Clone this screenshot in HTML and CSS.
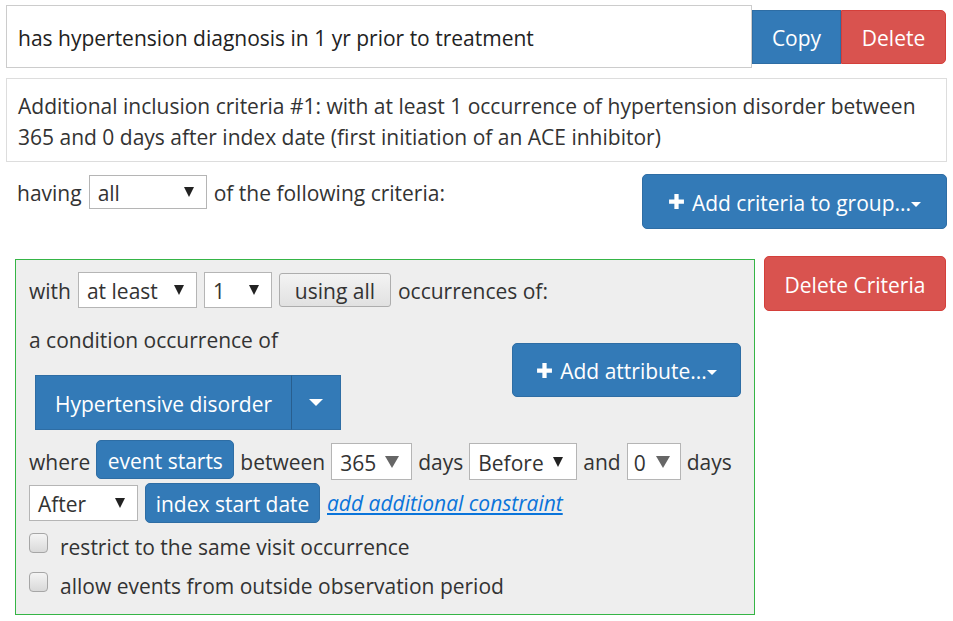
FILE: index.html
```html
<!DOCTYPE html>
<html>
<head>
<meta charset="utf-8">
<link rel="stylesheet" href="styles.css">
</head>
<body>
<div class="page">
  <div class="title-row">
    <div class="name-input">has hypertension diagnosis in 1 yr prior to treatment</div>
    <button class="btn primary copy">Copy</button>
    <button class="btn danger del">Delete</button>
  </div>
  <div class="desc">Additional inclusion criteria #1: with at least 1 occurrence of hypertension disorder between 365 and 0 days after index date (first initiation of an ACE inhibitor)</div>
  <div class="having-row">
    <div class="having">
      <span class="lbl">having</span>
      <span class="sel sel-all"><span>all</span><span class="tri"></span></span>
      <span class="lbl">of the following criteria:</span>
    </div>
    <button class="btn primary add-group">
      <svg class="plus" viewBox="0 0 16 16"><path d="M6 1h4v5h5v4h-5v5H6v-5H1V6h5z" fill="#fff"/></svg>
      <span>Add criteria to group...</span><span class="caret"></span>
    </button>
  </div>
  <div class="criteria-row">
    <div class="criteria-box">
      <div class="row-a">
        <span class="lbl">with</span>
        <span class="sel sel-atleast"><span>at least</span><span class="tri"></span></span>
        <span class="sel sel-one"><span>1</span><span class="tri"></span></span>
        <button class="btn btn-default using">using all</button>
        <span class="lbl">occurrences of:</span>
      </div>
      <div class="row-b">
        <div class="cond-col">
          <div class="cond-text">a condition occurrence of</div>
          <div class="concept">
            <button class="btn primary concept-main">Hypertensive disorder</button>
            <button class="btn primary concept-caret"><span class="caret big"></span></button>
          </div>
        </div>
        <button class="btn primary add-attr">
          <svg class="plus" viewBox="0 0 16 16"><path d="M6 1h4v5h5v4h-5v5H6v-5H1V6h5z" fill="#fff"/></svg>
          <span>Add attribute...</span><span class="caret"></span>
        </button>
      </div>
      <div class="row-c">
        <span class="txt">where</span>
        <button class="btn primary event">event starts</button>
        <span class="txt">between</span>
        <span class="sel sel-365"><span>365</span><span class="tri gray"></span></span>
        <span class="txt">days</span>
        <span class="sel sel-before"><span>Before</span><span class="tri"></span></span>
        <span class="txt">and</span>
        <span class="sel sel-zero"><span>0</span><span class="tri gray"></span></span>
        <span class="txt">days</span>
      </div>
      <div class="row-d">
        <span class="sel sel-after"><span>After</span><span class="tri"></span></span>
        <button class="btn primary index">index start date</button>
        <a class="link" href="#">add additional constraint</a>
      </div>
      <div class="check-row first">
        <span class="checkbox"></span>
        <span>restrict to the same visit occurrence</span>
      </div>
      <div class="check-row second">
        <span class="checkbox"></span>
        <span>allow events from outside observation period</span>
      </div>
    </div>
    <button class="btn danger del-crit">Delete Criteria</button>
  </div>
</div>
</body>
</html>
```
FILE: styles.css
```css
body {
  margin: 0;
  font-family: "Open Sans", "Segoe UI", sans-serif;
  font-size: 21px;
  line-height: 31px;
  color: #333;
  background: #fff;
}

.page {
  padding: 5px 0 0 6px;
  width: 941px;
}

.btn {
  font: inherit;
  line-height: 31px;
  border: 1px solid;
  display: inline-flex;
  align-items: center;
  justify-content: center;
  color: #fff;
  box-sizing: border-box;
  padding: 3px 0 0;
  margin: 0;
  border-radius: 5px;
  white-space: nowrap;
}

.primary {
  background: #337ab7;
  border-color: #2e6da4;
}

.danger {
  background: #d9534f;
  border-color: #d43f3a;
}

.btn-default {
  background: linear-gradient(#f3f3f3, #e1e1e1);
  border-color: #adadad;
  color: #333;
  border-radius: 3px;
}

.lbl {
  margin-top: 3px;
}

.title-row {
  display: flex;
  align-items: center;
  width: 940px;
}

.name-input {
  box-sizing: border-box;
  width: 746px;
  height: 63px;
  border: 1px solid #ccc;
  padding: 4px 11px 0;
  display: flex;
  align-items: center;
  color: #222;
}

.copy {
  width: 89px;
  height: 54px;
  border-radius: 0;
}

.del {
  width: 105px;
  height: 54px;
  border-radius: 0 5px 5px 0;
}

.desc {
  margin-top: 10px;
  box-sizing: border-box;
  height: 84px;
  border: 1px solid #ddd;
  padding: 12px 11px 8px;
}

.having-row {
  margin-top: 12px;
  display: flex;
  justify-content: space-between;
  align-items: flex-start;
}

.having {
  display: flex;
  align-items: center;
  gap: 7px;
  padding: 1px 0 0 11px;
}

.sel {
  box-sizing: border-box;
  background: #fff;
  border: 1px solid #b5b5b5;
  display: flex;
  align-items: center;
  justify-content: space-between;
  padding: 3px 12px 0 8px;
  color: #333;
}

.tri {
  width: 0;
  height: 0;
  border-left: 5px solid transparent;
  border-right: 5px solid transparent;
  border-top: 10px solid #222;
  margin-bottom: 3px;
}

.tri.gray {
  border-left-width: 7px;
  border-right-width: 7px;
  border-top: 12px solid #666;
}

.sel-all {
  width: 118px;
  height: 34px;
}

.plus {
  width: 17px;
  height: 17px;
  margin: 0 7px 3px 0;
}

.caret {
  display: inline-block;
  width: 0;
  height: 0;
  border-left: 5px solid transparent;
  border-right: 5px solid transparent;
  border-top: 5px solid #fff;
  margin-top: 2px;
}

.caret.big {
  border-left-width: 7px;
  border-right-width: 7px;
  border-top-width: 7px;
  margin-top: 0;
}

.add-group {
  width: 305px;
  height: 55px;
}

.criteria-row {
  margin-top: 27px;
  display: flex;
  align-items: flex-start;
}

.criteria-box {
  margin: 3px 0 0 9px;
  width: 740px;
  box-sizing: border-box;
  border: 1px solid #35b546;
  background: #eee;
  padding: 12px 13px 12px;
}

.del-crit {
  margin-left: 9px;
  width: 182px;
  height: 55px;
}

.row-a {
  display: flex;
  align-items: center;
  gap: 7px;
  height: 36px;
}

.sel-atleast {
  width: 119px;
  height: 36px;
}

.sel-one {
  width: 68px;
  height: 36px;
}

.using {
  width: 112px;
  height: 34px;
}

.row-b {
  display: flex;
  align-items: flex-start;
  margin-top: 15px;
}

.cond-col {
  flex: 1;
}

.cond-text {
  padding-top: 2px;
}

.concept {
  display: flex;
  margin: 19px 0 0 6px;
  width: 306px;
  height: 55px;
}

.concept-main {
  width: 257px;
  height: 55px;
  border-radius: 0;
  border-right-color: #285e8e;
}

.concept-caret {
  width: 49px;
  height: 55px;
  border-radius: 0;
  border-left: 0;
  padding-top: 0;
}

.add-attr {
  margin-top: 20px;
  width: 229px;
  height: 54px;
}

.row-c {
  display: flex;
  align-items: flex-start;
  gap: 6px;
  margin-top: 10px;
}

.row-c .txt {
  margin-top: 7px;
}

.event {
  width: 138px;
  height: 39px;
}

.sel-365 {
  margin-top: 3px;
  width: 81px;
  height: 37px;
  padding-right: 12px;
}

.sel-before {
  margin-top: 3px;
  width: 108px;
  height: 37px;
  padding-right: 13px;
}

.sel-zero {
  margin-top: 3px;
  width: 54px;
  height: 37px;
  padding-left: 6px;
  padding-right: 10px;
}

.row-d {
  display: flex;
  align-items: flex-start;
  gap: 7px;
  margin-top: 3px;
}

.sel-after {
  margin-top: 2px;
  width: 109px;
  height: 36px;
}

.index {
  width: 175px;
  height: 40px;
}

.link {
  margin-top: 5px;
  color: #0a74da;
  font-style: italic;
  text-decoration: underline;
}

.check-row {
  display: flex;
  align-items: flex-start;
  gap: 12px;
}

.check-row.first {
  margin-top: 9px;
}

.check-row.second {
  margin-top: 8px;
}

.checkbox {
  margin-top: 1px;
  width: 19px;
  height: 20px;
  box-sizing: border-box;
  border: 1px solid #a6a6a6;
  border-radius: 4px;
  background: linear-gradient(#f4f4f4, #d9d9d9);
}
```
